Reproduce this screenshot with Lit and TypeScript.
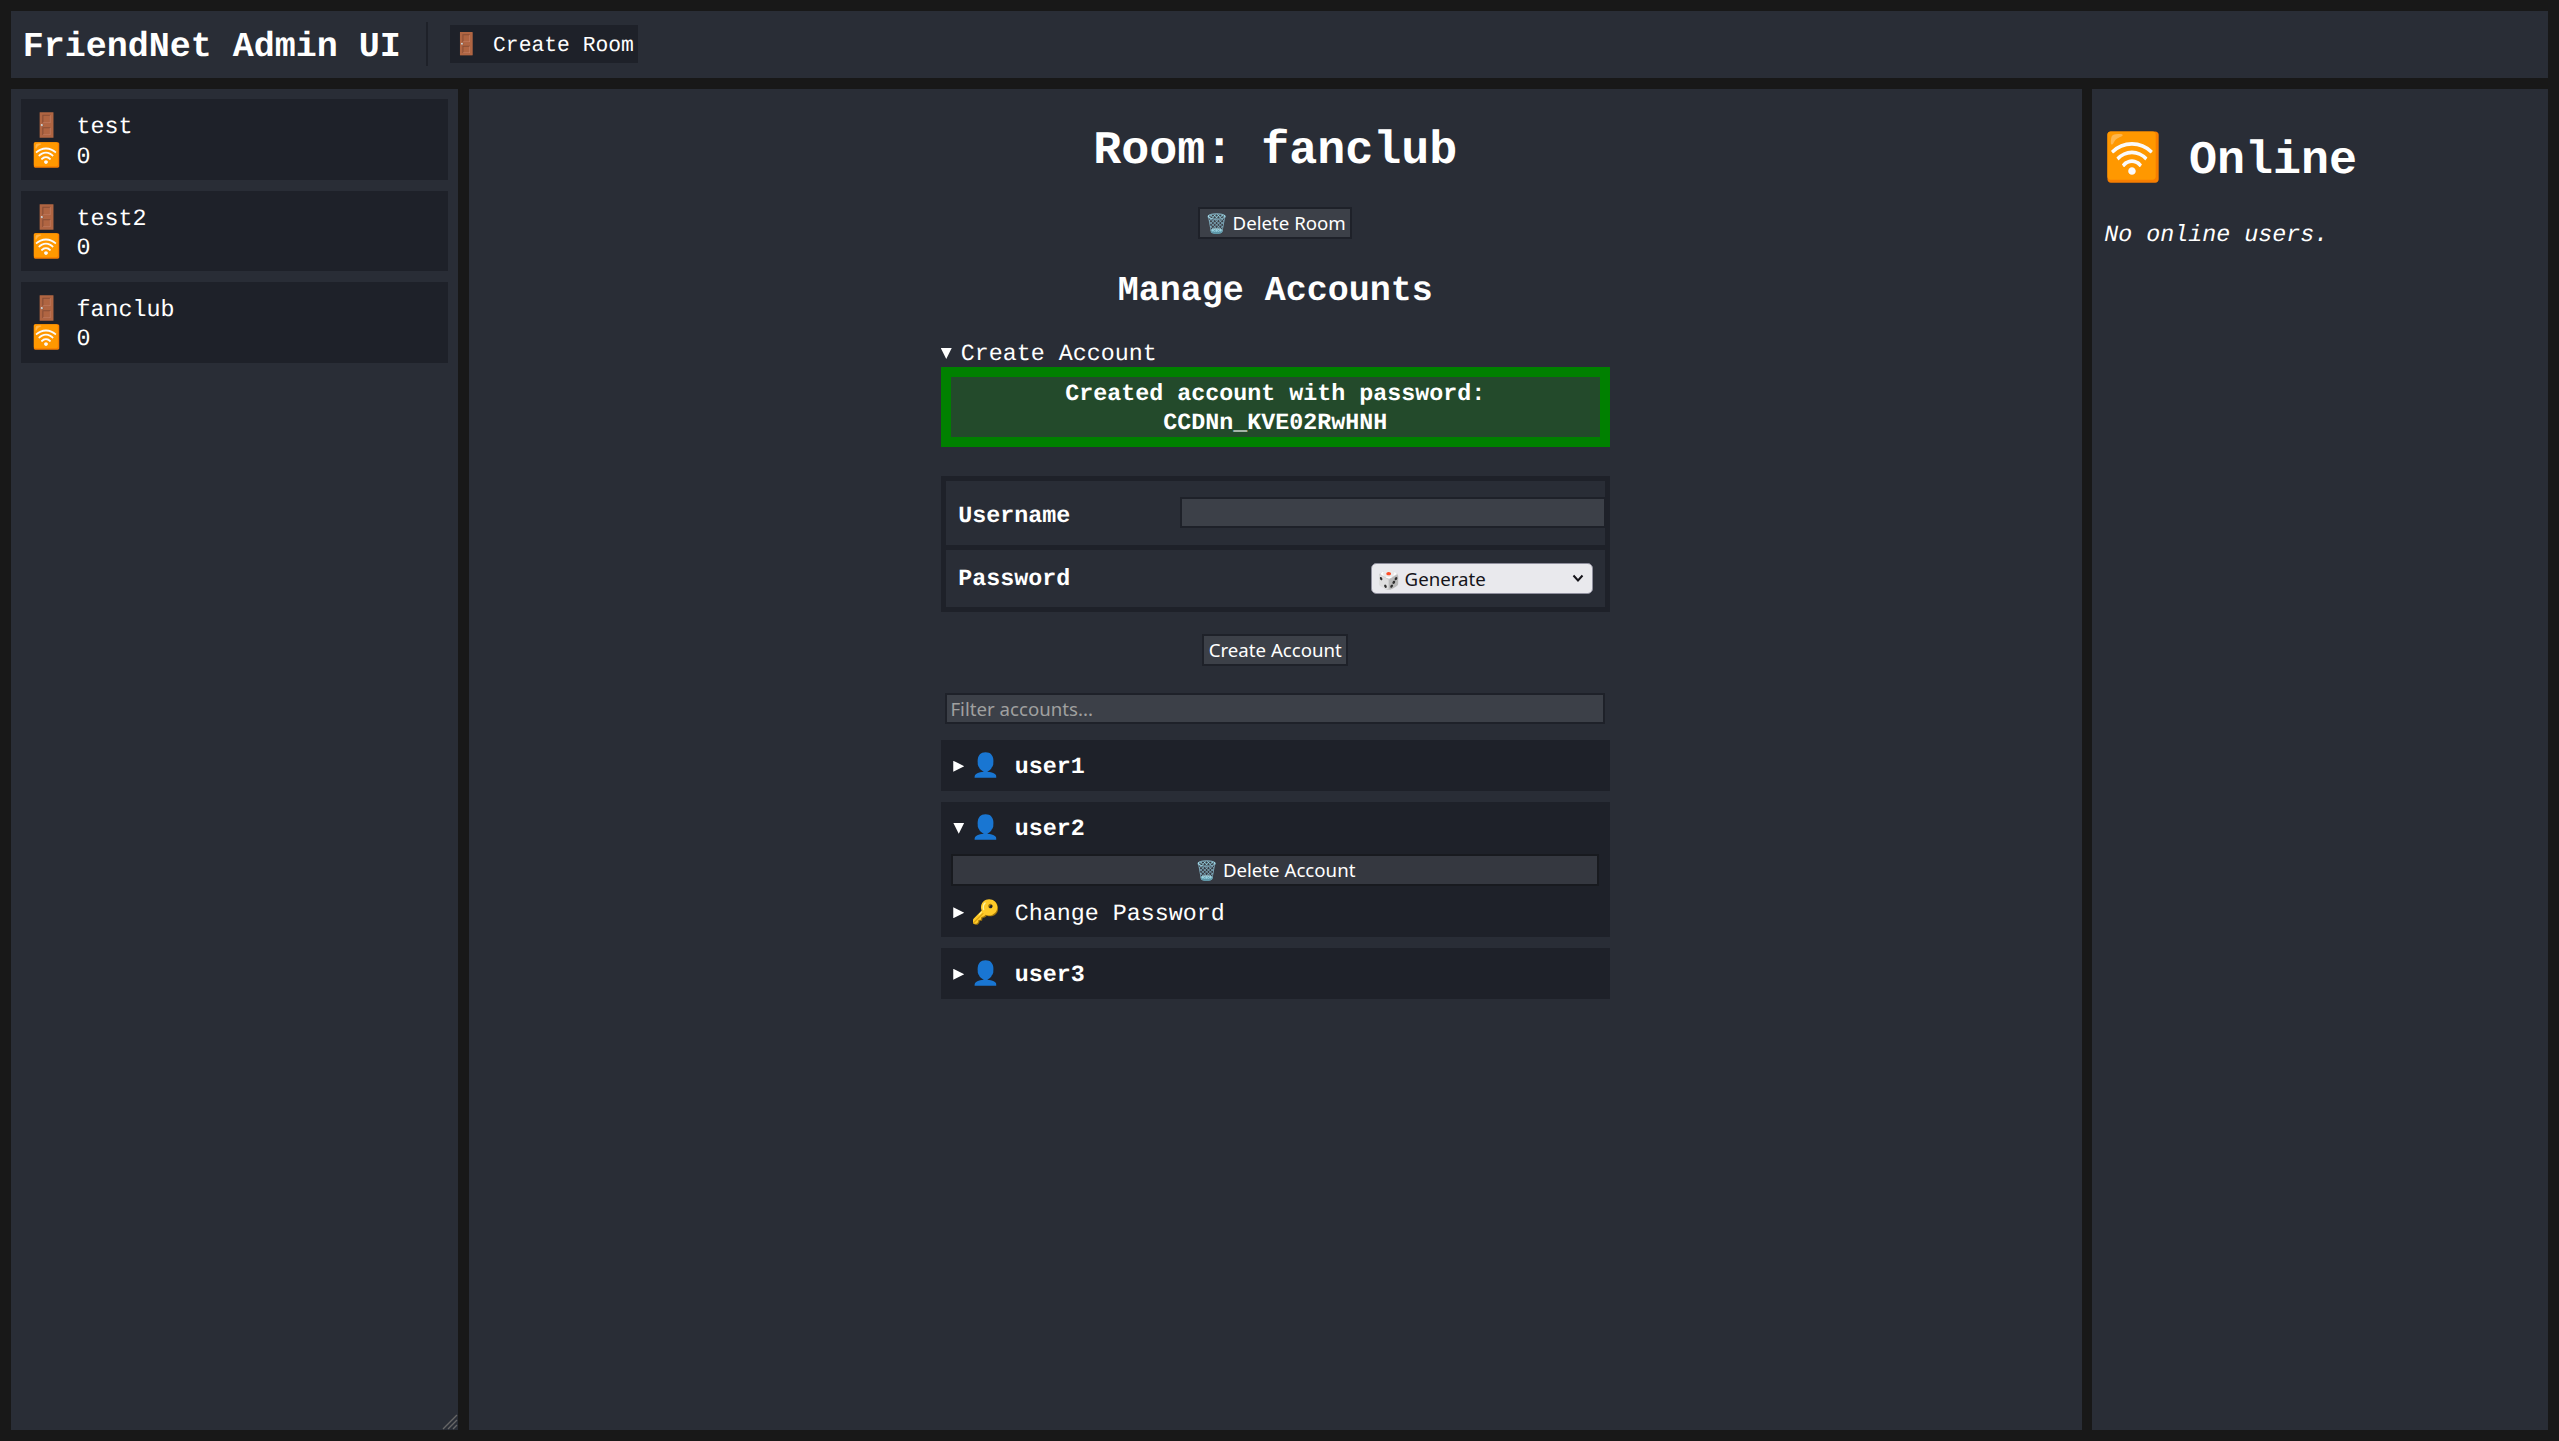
import { LitElement, html, css } from "lit";
import { customElement } from "lit/decorators.js";

const mono = css`"Cousine", "Liberation Mono", monospace`;

@customElement("app-root")
export class AppRoot extends LitElement {
  static styles = css`
    :host { display: grid; box-sizing: border-box; width: 100%; height: 100vh; padding: 10.67px; gap: 10.67px;
      grid-template-columns: 447.5px 1fr 456px; grid-template-rows: 67.33px 1fr; background: #181818; color: #fff;
      font-family: ${mono}; font-size: 23.33px; line-height: 29.33px; text-rendering: geometricPrecision; }
    * { box-sizing: border-box; }
    .panel { background: #292d36; position: relative; min-height: 0; }
    header { grid-column: 1 / -1; display: flex; align-items: center; padding: 0 10.67px 0 12px; }
    .title { font-size: 35px; font-weight: 700; margin: 0; line-height: 40px; padding-top: 4.5px; }
    .sep { width: 2px; height: 44px; background: #1e2129; margin: 0 22px 0 25px; }
    .create-room { background: #1e2129; font-size: 21.33px; height: 38px; padding: 5px 3px 0 4px; display: flex; align-items: center; width: 188px; white-space: pre; }
    .side { padding: 10.67px; display: flex; flex-direction: column; gap: 10.67px; }
    .card { background: #1e2129; padding: 15px 10.67px 0; height: 80.67px; white-space: pre; word-spacing: 1.5px; }
    main { display: flex; flex-direction: column; align-items: center; padding-top: 36px; }
    h1 { font-size: 46.67px; line-height: 53px; margin: 0 0 29.5px; }
    h2 { font-size: 35px; line-height: 40px; margin: 31.5px 0 26.8px; }
    .btn { font-family: "Noto Sans", sans-serif; font-size: 18.67px; line-height: 24px; height: 32px; background: #3c4048; color: #fff; border: 2.67px solid #1e2129; padding: 0 4.3px; display: flex; align-items: center; justify-content: center; white-space: pre; }
    .col { width: 669px; display: flex; flex-direction: column; align-items: stretch; }
    .tri { display: inline-block; width: 11px; height: 11px; background: #fff; margin-right: 9px; vertical-align: 1.5px; }
    .tri.open { clip-path: polygon(0 0, 100% 0, 50% 100%); }
    .tri.closed { clip-path: polygon(0 0, 100% 50%, 0 100%); }
    summary { list-style: none; white-space: pre; }
    summary::-webkit-details-marker { display: none; }
    .ca-sum { height: 29.2px; line-height: 36px; }
    .notice { border: 10.67px solid #008000; background: #234a2b; font-weight: 700; text-align: center; height: 80px; padding-top: 4px; }
    .form { margin-top: 29px; border: 5.67px solid #1e2129; height: 136px; display: flex; flex-direction: column; }
    .row { display: flex; align-items: center; justify-content: space-between; padding-left: 12.5px; font-weight: 700; }
    .row.a { border-bottom: 5.67px solid #1e2129; height: 69.5px; }
    .row.a span { padding-top: 9px; }
    .row.b > span:first-child { padding-top: 5px; }
    .row.b { flex: 1; padding-right: 12px; }
    .input { background: #3c4048; border: 2.67px solid #1e2129; display: block; font-family: "Noto Sans", sans-serif; font-size: 18.67px; color: #fff; padding: 0 3px; outline: none; border-radius: 0; }
    .input::placeholder { color: #a0a0a0; opacity: 1; }
    .u { width: 426.5px; height: 31px; margin-right: -1.5px; }
    .sel { position: relative; width: 222px; height: 31px; }
    select { appearance: none; width: 100%; height: 100%; background: #e9e9ed; color: #15141a; border: 1.33px solid #8f8f9d; border-radius: 5.33px; font-family: "Noto Sans", sans-serif; font-size: 18.67px; padding: 0 5px; display: block; }
    .sel svg { position: absolute; right: 8.5px; top: 10.5px; pointer-events: none; }
    .center { margin: 22px auto 0; }
    .filter { margin: 27px 4.67px 16px; height: 31px; width: calc(100% - 9.33px); }
    .users { display: flex; flex-direction: column; gap: 11px; }
    details.user { background: #1e2129; }
    .user summary { padding: 13.5px 11px 0 12.5px; height: 51px; font-weight: 700; line-height: 30px; }
    .user summary .tri { margin-right: 7.5px; }
    .user .pw summary { font-weight: 400; padding-top: 14px; }
    .wide { background: #353840; border-color: #181a1f; margin: 1px 10.67px 0; width: calc(100% - 21.33px); }
    .resize { position: absolute; right: 0; bottom: 0; }
    .ital { font-style: italic; margin: 34.3px 0 0; line-height: 29px; }
    .online { padding: 0 10.67px 0 12px; }
    .online h1 { margin: 46px 0 0; line-height: 53px; word-spacing: -1.5px; }
  `;

  render() {
    const tri = (o: boolean) => html`<span class="tri ${o ? "open" : "closed"}"></span>`;
    return html`
      <header class="panel">
        <div class="title">FriendNet Admin UI</div>
        <div class="sep"></div>
        <div class="create-room">🚪 Create Room</div>
      </header>
      <aside class="panel side">
        ${["test", "test2", "fanclub"].map((n) => html`<div class="card">🚪 ${n}<br />🛜 0</div>`)}
        <svg class="resize" width="16" height="16" viewBox="0 0 16 16"><path d="M15 1 1 15M15 6 6 15M15 11 11 15" stroke="#666" stroke-width="1.4" fill="none"/></svg>
      </aside>
      <main class="panel">
        <h1>Room: fanclub</h1>
        <button class="btn">🗑️ Delete Room</button>
        <h2>Manage Accounts</h2>
        <div class="col">
          <details open>
            <summary class="ca-sum">${tri(true)}Create Account</summary>
            <div class="notice">Created account with password:<br />CCDNn_KVE02RwHNH</div>
            <div class="form">
              <div class="row a"><span>Username</span><input class="input u" /></div>
              <div class="row b"><span>Password</span>
                <span class="sel"><select><option>🎲 Generate</option></select>
                  <svg width="12" height="10" viewBox="0 0 12 10"><path d="M1.5 2.5 6 7.5 10.5 2.5" stroke="#15141a" stroke-width="2" fill="none"/></svg></span>
              </div>
            </div>
            <button class="btn center">Create Account</button>
          </details>
          <input class="input filter" placeholder="Filter accounts..." />
          <div class="users">
            <details class="user"><summary>${tri(false)}👤 user1</summary></details>
            <details class="user" open><summary>${tri(true)}👤 user2</summary>
              <button class="btn wide">🗑️ Delete Account</button>
              <details class="pw"><summary>${tri(false)}🔑 Change Password</summary></details>
            </details>
            <details class="user"><summary>${tri(false)}👤 user3</summary></details>
          </div>
        </div>
      </main>
      <aside class="panel online">
        <h1>🛜 Online</h1>
        <p class="ital">No online users.</p>
      </aside>
    `;
  }
}
